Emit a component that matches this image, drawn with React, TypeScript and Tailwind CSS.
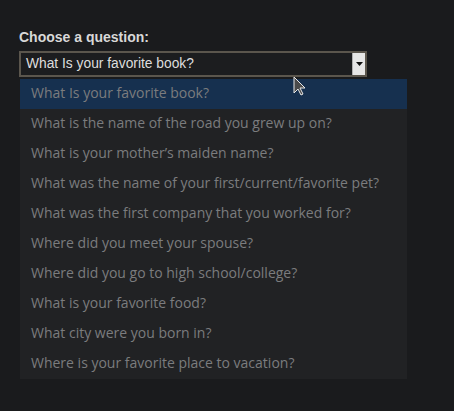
import React from "react"

const preguntas = [
  "What Is your favorite book?",
  "What is the name of the road you grew up on?",
  "What is your mother’s maiden name?",
  "What was the name of your first/current/favorite pet?",
  "What was the first company that you worked for?",
  "Where did you meet your spouse?",
  "Where did you go to high school/college?",
  "What is your favorite food?",
  "What city were you born in?",
  "Where is your favorite place to vacation?",
]

export default function App() {
  return (
    <div className="relative w-[454px] h-[411px] bg-[#1a1b1d] overflow-hidden">
      <div className="pt-[28px] pl-[19px]">
        <div
          className="text-[14px] font-bold text-[#d8d8d8] leading-[18px]"
          style={{ fontFamily: '"Liberation Sans", Arial, sans-serif' }}
        >
          Choose a question:
        </div>

        {/* select */}
        <div className="mt-[5px] w-[348px] h-[26px] border-2 border-[#5b564d] bg-[#1c1d1f] flex items-center justify-between">
          <span
            className="pl-[5px] text-[13.8px] text-[#dedede]"
            style={{ fontFamily: '"Liberation Sans", Arial, sans-serif' }}
          >
            What Is your favorite book?
          </span>
          <div className="w-[13px] h-full bg-[#e6e6e6] border-l border-[#b0b0b0] flex items-center justify-center">
            <svg width="7" height="4" viewBox="0 0 7 4">
              <path d="M0 0h7L3.5 4z" fill="#111" />
            </svg>
          </div>
        </div>

        {/* lista */}
        <div
          className="mt-[2px] ml-[1px] w-[387px] bg-[#212224]"
          style={{ fontFamily: '"Open Sans", "Noto Sans", sans-serif' }}
        >
          {preguntas.map((p, i) => (
            <div
              key={i}
              className={`h-[30px] pl-[11px] pb-[4px] flex items-center text-[14px] text-[#7b7c7e] ${
                i === 0 ? "bg-[#16304f]" : ""
              }`}
            >
              {p}
            </div>
          ))}
        </div>
      </div>

      {/* cursor */}
      <svg
        className="absolute left-[293px] top-[76px]"
        width="14"
        height="22"
        viewBox="0 0 14 22"
      >
        <path
          d="M1 1v16l4-4 3 6 2-1-3-6h5z"
          fill="#4a4a4a"
          stroke="#e8e8e8"
          strokeWidth="1"
        />
      </svg>
    </div>
  )
}
